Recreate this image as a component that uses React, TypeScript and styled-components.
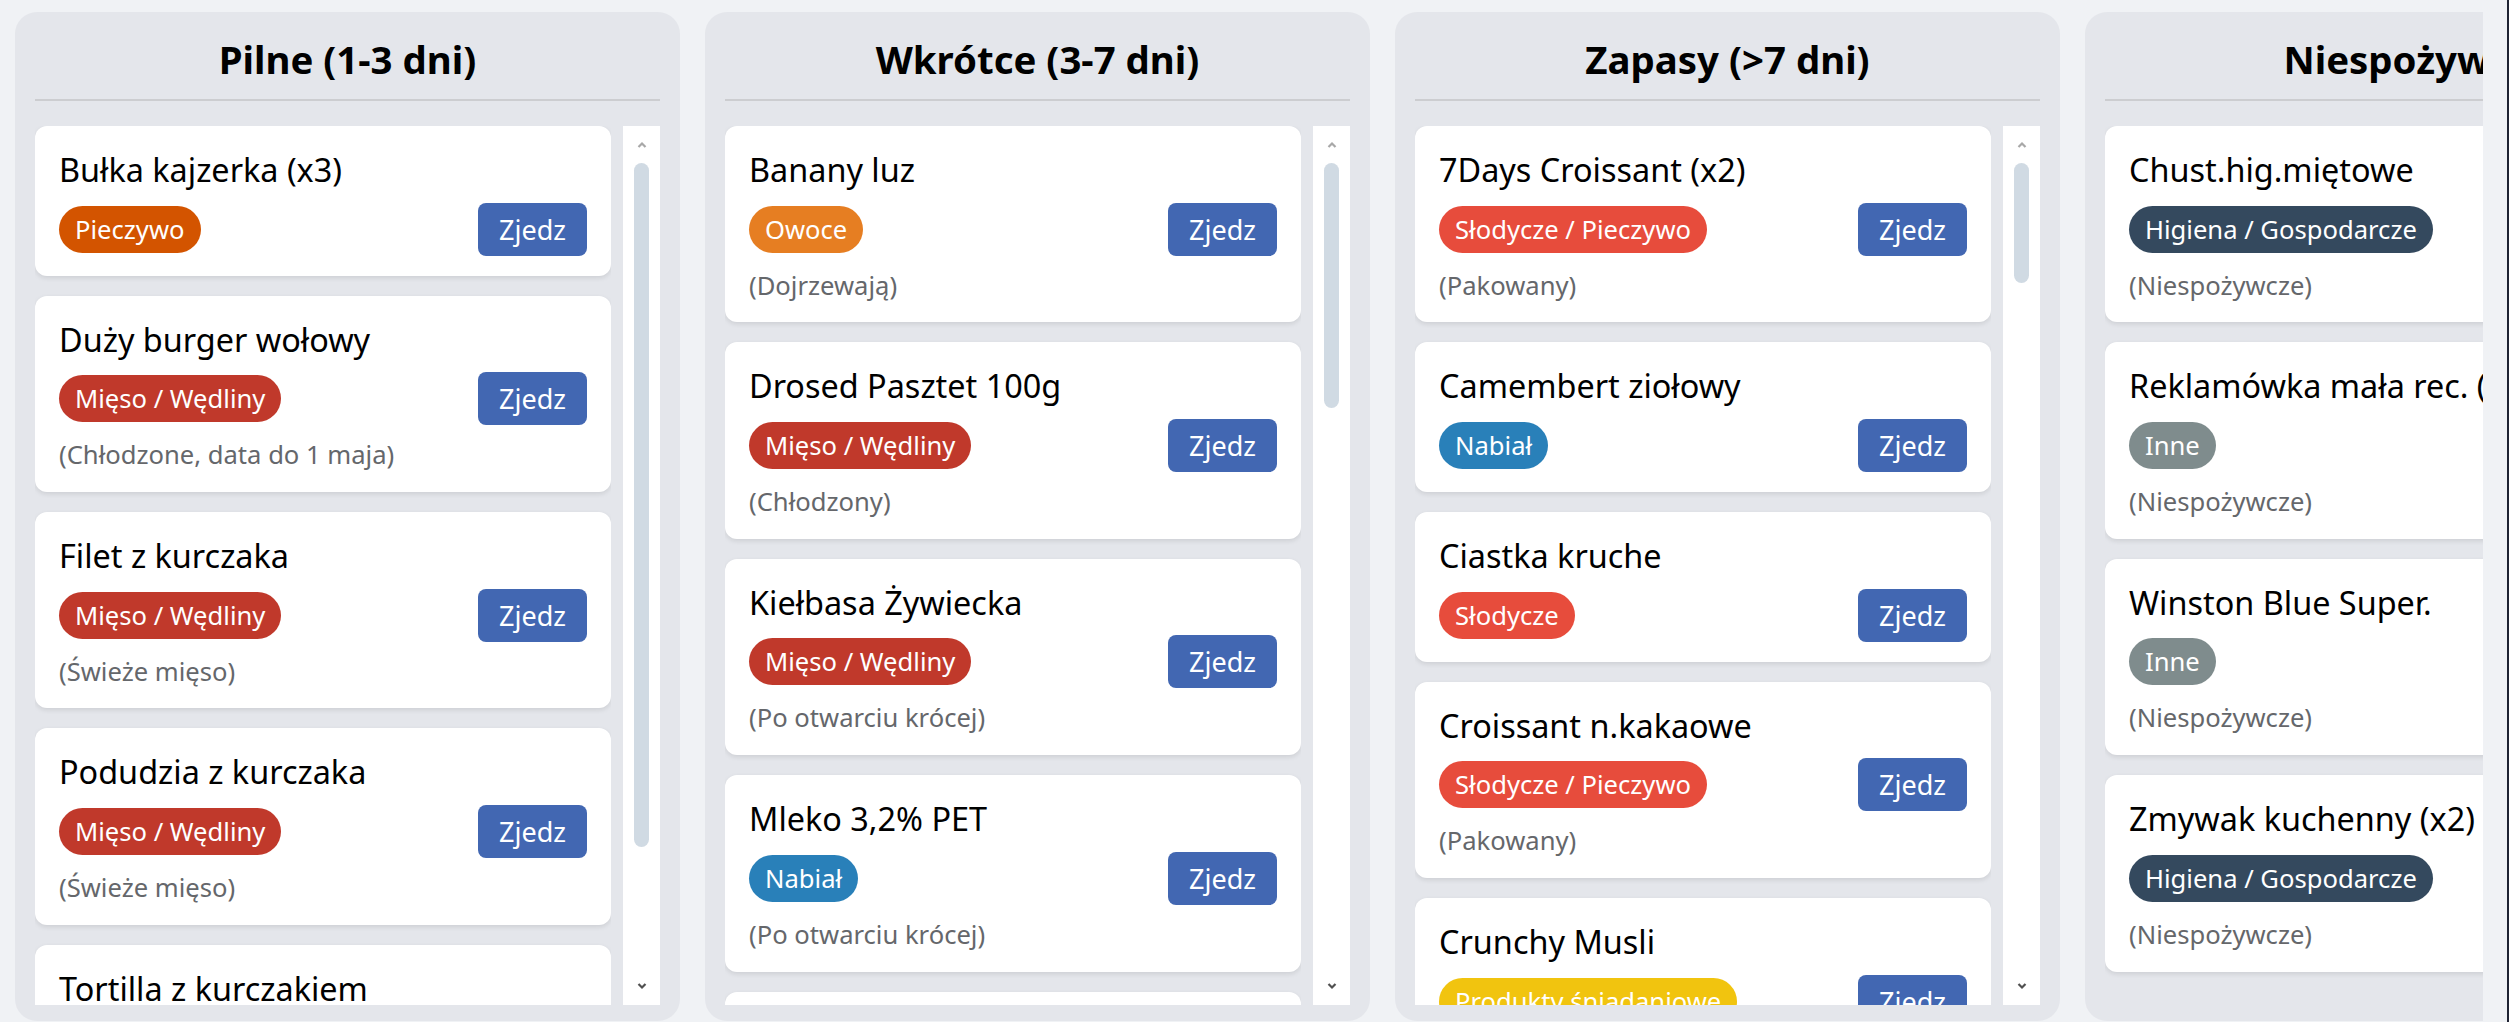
import React, { useLayoutEffect, useRef, useState } from "react";
import styled, { createGlobalStyle } from "styled-components";

type Item = { name: string; category: string; note?: string };
type Column = { title: string; items: Item[] };

const CATEGORY_COLORS: Record<string, string> = {
  Pieczywo: "#d35400",
  "Mięso / Wędliny": "#c0392b",
  Owoce: "#e67e22",
  Warzywa: "#27ae60",
  Nabiał: "#2980b9",
  Słodycze: "#e74c3c",
  "Słodycze / Pieczywo": "#e74c3c",
  "Produkty śniadaniowe": "#f1c40f",
  "Gotowe dania": "#8e44ad",
  "Produkty sypkie": "#b9770e",
  Napoje: "#16a085",
  Przetwory: "#d68910",
  "Higiena / Gospodarcze": "#34495e",
  Inne: "#7f8c8d",
};

const COLUMNS: Column[] = [
  {
    title: "Pilne (1-3 dni)",
    items: [
      { name: "Bułka kajzerka (x3)", category: "Pieczywo" },
      { name: "Duży burger wołowy", category: "Mięso / Wędliny", note: "(Chłodzone, data do 1 maja)" },
      { name: "Filet z kurczaka", category: "Mięso / Wędliny", note: "(Świeże mięso)" },
      { name: "Podudzia z kurczaka", category: "Mięso / Wędliny", note: "(Świeże mięso)" },
      { name: "Tortilla z kurczakiem", category: "Gotowe dania", note: "(Chłodzona)" },
    ],
  },
  {
    title: "Wkrótce (3-7 dni)",
    items: [
      { name: "Banany luz", category: "Owoce", note: "(Dojrzewają)" },
      { name: "Drosed Pasztet 100g", category: "Mięso / Wędliny", note: "(Chłodzony)" },
      { name: "Kiełbasa Żywiecka", category: "Mięso / Wędliny", note: "(Po otwarciu krócej)" },
      { name: "Mleko 3,2% PET", category: "Nabiał", note: "(Po otwarciu krócej)" },
      { name: "Ogórek zielony", category: "Warzywa", note: "(Przechowywać w lodówce)" },
      { name: "Parówki Berlinki", category: "Mięso / Wędliny", note: "(Po otwarciu krócej)" },
      { name: "Pieczarki", category: "Warzywa" },
      { name: "Pomidory malinowe", category: "Warzywa", note: "(Dojrzewają)" },
      { name: "Ser gouda plastry", category: "Nabiał", note: "(Po otwarciu krócej)" },
      { name: "Serek wiejski", category: "Nabiał", note: "(Chłodzony)" },
      { name: "Szynka konserwowa", category: "Mięso / Wędliny" },
      { name: "Śmietana 18%", category: "Nabiał", note: "(Po otwarciu krócej)" },
      { name: "Twaróg półtłusty", category: "Nabiał", note: "(Chłodzony)" },
      { name: "Winogrona", category: "Owoce" },
    ],
  },
  {
    title: "Zapasy (>7 dni)",
    items: [
      { name: "7Days Croissant (x2)", category: "Słodycze / Pieczywo", note: "(Pakowany)" },
      { name: "Camembert ziołowy", category: "Nabiał" },
      { name: "Ciastka kruche", category: "Słodycze" },
      { name: "Croissant n.kakaowe", category: "Słodycze / Pieczywo", note: "(Pakowany)" },
      { name: "Crunchy Musli", category: "Produkty śniadaniowe", note: "(Suche miejsce)" },
      { name: "Czekolada mleczna", category: "Słodycze", note: "(Suche miejsce)" },
      { name: "Dżem truskawkowy", category: "Przetwory", note: "(Po otwarciu w lodówce)" },
      { name: "Herbata czarna", category: "Napoje" },
      { name: "Kasza gryczana", category: "Produkty sypkie", note: "(Suche miejsce)" },
      { name: "Kawa mielona", category: "Napoje", note: "(Zamknięta szczelnie)" },
      { name: "Ketchup łagodny", category: "Przetwory", note: "(Po otwarciu w lodówce)" },
      { name: "Konserwa turystyczna", category: "Mięso / Wędliny", note: "(Puszka)" },
      { name: "Makaron penne", category: "Produkty sypkie" },
      { name: "Masło orzechowe", category: "Przetwory", note: "(Słoik)" },
      { name: "Mąka pszenna", category: "Produkty sypkie", note: "(Suche miejsce)" },
      { name: "Miód wielokwiatowy", category: "Przetwory" },
      { name: "Musztarda sarepska", category: "Przetwory", note: "(Po otwarciu w lodówce)" },
      { name: "Oliwa z oliwek", category: "Przetwory", note: "(Chronić przed światłem)" },
      { name: "Orzechy włoskie", category: "Produkty śniadaniowe", note: "(Pakowane)" },
      { name: "Otręby owsiane", category: "Produkty śniadaniowe" },
      { name: "Passata pomidorowa", category: "Przetwory", note: "(Po otwarciu krócej)" },
      { name: "Płatki owsiane", category: "Produkty śniadaniowe", note: "(Suche miejsce)" },
      { name: "Ryż basmati", category: "Produkty sypkie" },
      { name: "Sok pomarańczowy", category: "Napoje", note: "(Po otwarciu krócej)" },
      { name: "Sól himalajska", category: "Produkty sypkie" },
      { name: "Tuńczyk w sosie własnym", category: "Przetwory", note: "(Puszka)" },
      { name: "Wafle ryżowe", category: "Produkty śniadaniowe", note: "(Pakowane)" },
      { name: "Woda mineralna (x6)", category: "Napoje", note: "(Zgrzewka)" },
      { name: "Żelki owocowe", category: "Słodycze", note: "(Pakowane)" },
    ],
  },
  {
    title: "Niespożywcze",
    items: [
      { name: "Chust.hig.miętowe", category: "Higiena / Gospodarcze", note: "(Niespożywcze)" },
      { name: "Reklamówka mała rec. (x2)", category: "Inne", note: "(Niespożywcze)" },
      { name: "Winston Blue Super.", category: "Inne", note: "(Niespożywcze)" },
      { name: "Zmywak kuchenny (x2)", category: "Higiena / Gospodarcze", note: "(Niespożywcze)" },
    ],
  },
];

const GlobalStyle = createGlobalStyle`
  * { box-sizing: border-box; }
  html, body {
    margin: 0;
    padding: 0;
    background: #f0f2f5;
    font-family: "Noto Sans", "Open Sans", sans-serif;
    overflow: hidden;
  }
`;

const Page = styled.div`
  width: 100vw;
  height: 100vh;
  display: flex;
  background: #f0f2f5;
  border-right: 2px solid #1f2333;
`;

const Board = styled.div`
  flex: 1;
  min-width: 0;
  display: flex;
  gap: 25px;
  padding: 12px 0 0 15px;
  margin-right: 24px;
  overflow: hidden;
`;

const Panel = styled.section`
  flex: 0 0 665px;
  height: calc(100vh - 13px);
  display: flex;
  flex-direction: column;
  background: #e4e6eb;
  border-radius: 22px;
  padding: 21px 20px 16px;
`;

const PanelTitle = styled.h2`
  margin: 0 0 25px;
  padding-bottom: 14px;
  border-bottom: 2px solid #cccdd0;
  font-size: 38.4px;
  font-weight: 700;
  text-align: center;
  color: #000;
  white-space: nowrap;
`;

const ListArea = styled.div`
  flex: 1;
  min-height: 0;
  display: flex;
  gap: 12px;
`;

const Viewport = styled.div`
  flex: 1;
  min-width: 0;
  overflow-y: auto;
  scrollbar-width: none;
  &::-webkit-scrollbar {
    display: none;
  }
`;

const Stack = styled.div`
  display: flex;
  flex-direction: column;
  gap: 20px;
  padding-bottom: 20px;
`;

const Rail = styled.div`
  flex: 0 0 37px;
  display: flex;
  flex-direction: column;
  background: #fff;
`;

const RailButton = styled.div<{ $color: string }>`
  flex: 0 0 37px;
  display: flex;
  align-items: center;
  justify-content: center;
  color: ${(p) => p.$color};
`;

const RailTrack = styled.div`
  flex: 1;
  min-height: 0;
  display: flex;
  flex-direction: column;
  align-items: center;
  overflow: hidden;
`;

const Thumb = styled.div`
  flex: 0 0 auto;
  width: 15px;
  border-radius: 7.5px;
  background: #d0dae3;
`;

const Card = styled.article`
  background: #fff;
  border-radius: 12px;
  padding: 22px 24px 20px;
  box-shadow: 0 2px 5px rgba(0, 0, 0, 0.1);
`;

const ItemName = styled.h3`
  margin: 0 0 11px;
  font-size: 32.4px;
  line-height: 43.6px;
  font-weight: 400;
  color: #000;
  white-space: nowrap;
`;

const ItemRow = styled.div`
  display: flex;
  align-items: center;
  justify-content: space-between;
`;

const Badge = styled.span<{ $color: string }>`
  display: inline-block;
  padding: 6px 16px;
  border-radius: 999px;
  background: ${(p) => p.$color};
  color: #fff;
  font-size: 25.6px;
  white-space: nowrap;
`;

const EatButton = styled.button`
  border: none;
  border-radius: 8px;
  padding: 8px 21px;
  background: #4267b2;
  color: #fff;
  font-family: inherit;
  font-size: 27px;
  line-height: 37px;
  cursor: pointer;
`;

const Note = styled.div`
  margin-top: 14px;
  font-size: 25.6px;
  line-height: 32.8px;
  color: #65676b;
  white-space: nowrap;
`;

const Chevron = ({ up }: { up?: boolean }) => (
  <svg width="10" height="7" viewBox="0 0 10 7">
    <polyline
      points={up ? "1.5,6 5,2.5 8.5,6" : "1.5,1 5,4.5 8.5,1"}
      fill="none"
      stroke="currentColor"
      strokeWidth="2.2"
    />
  </svg>
);

const ItemCard = ({ item }: { item: Item }) => (
  <Card>
    <ItemName>{item.name}</ItemName>
    <ItemRow>
      <Badge $color={CATEGORY_COLORS[item.category] || "#7f8c8d"}>{item.category}</Badge>
      <EatButton>Zjedz</EatButton>
    </ItemRow>
    {item.note && <Note>{item.note}</Note>}
  </Card>
);

// the native scrollbar is hidden in the screenshot browser, so the rail is drawn by hand
const ScrollList = ({ items }: { items: Item[] }) => {
  const viewRef = useRef<HTMLDivElement>(null);
  const stackRef = useRef<HTMLDivElement>(null);
  const [m, setM] = useState({ client: 0, scroll: 0, top: 0 });

  useLayoutEffect(() => {
    const el = viewRef.current;
    if (!el) return;
    const update = () => setM({ client: el.clientHeight, scroll: el.scrollHeight, top: el.scrollTop });
    update();
    const ro = new ResizeObserver(update);
    ro.observe(el);
    if (stackRef.current) ro.observe(stackRef.current);
    el.addEventListener("scroll", update);
    return () => {
      ro.disconnect();
      el.removeEventListener("scroll", update);
    };
  }, []);

  const overflowing = m.scroll > m.client + 1;
  const track = Math.max(0, m.client - 74);
  const thumbH = overflowing ? (track * m.client) / m.scroll : 0;
  const thumbTop = overflowing ? (track * m.top) / m.scroll : 0;

  return (
    <ListArea>
      <Viewport ref={viewRef}>
        <Stack ref={stackRef}>
          {items.map((item) => (
            <ItemCard key={item.name} item={item} />
          ))}
        </Stack>
      </Viewport>
      {overflowing && (
        <Rail>
          <RailButton $color={m.top <= 0 ? "#a8a8a8" : "#505050"}>
            <Chevron up />
          </RailButton>
          <RailTrack>
            <Thumb style={{ height: thumbH, marginTop: thumbTop }} />
          </RailTrack>
          <RailButton $color="#505050">
            <Chevron />
          </RailButton>
        </Rail>
      )}
    </ListArea>
  );
};

export default function App() {
  return (
    <>
      <GlobalStyle />
      <Page>
        <Board>
          {COLUMNS.map((col) => (
            <Panel key={col.title}>
              <PanelTitle>{col.title}</PanelTitle>
              <ScrollList items={col.items} />
            </Panel>
          ))}
        </Board>
      </Page>
    </>
  );
}
